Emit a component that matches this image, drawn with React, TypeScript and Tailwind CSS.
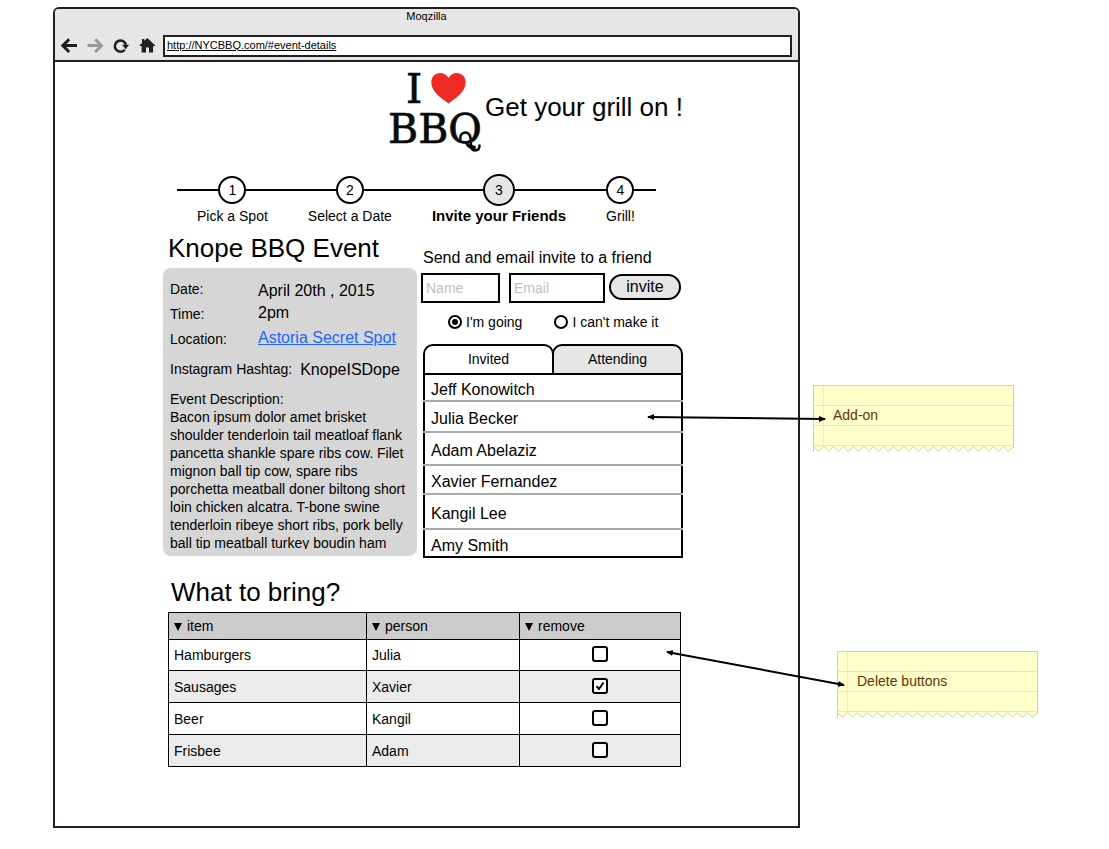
import { useState } from "react";
import type { ReactNode } from "react";

const steps = [
  { label: "Pick a Spot" },
  { label: "Select a Date" },
  { label: "Invite your Friends", current: true },
  { label: "Grill!" },
];

const guests = [
  { name: "Jeff Konowitch", row: "h-[27px]" },
  { name: "Julia Becker", row: "h-[31px]" },
  { name: "Adam Abelaziz", row: "h-[33px]" },
  { name: "Xavier Fernandez", row: "h-[29px]" },
  { name: "Kangil Lee", row: "h-[35px]" },
  { name: "Amy Smith", row: "h-[26px]" },
];

const supplies = [
  { item: "Hamburgers", person: "Julia", remove: false, row: "h-[31px]" },
  { item: "Sausages", person: "Xavier", remove: true, row: "h-8" },
  { item: "Beer", person: "Kangil", remove: false, row: "h-8" },
  { item: "Frisbee", person: "Adam", remove: false, row: "h-8" },
];

function ToolButton({ label, children }: { label: string; children: ReactNode }) {
  return (
    <button type="button" aria-label={label} className="size-4 shrink-0">
      <svg viewBox="0 0 16 16" className="block size-4">
        {children}
      </svg>
    </button>
  );
}

function BrowserBar() {
  return (
    <header className="border-b-2 border-[#231f20] bg-[#e6e6e6] pb-[3px]">
      <div className="text-center text-[11px] leading-[15px]">Moqzilla</div>
      <div className="mt-[11px] flex items-center gap-[10px] px-[6px]">
        <ToolButton label="Back">
          <path d="M8.2 1.2L1.800 7.600l6.400 6.400M2.200 7.600H16" fill="none" stroke="#231f20" strokeWidth="3" />
        </ToolButton>
        <ToolButton label="Forward">
          <path d="M8.2 1.2L14.600 7.600l-6.400 6.400M14.200 7.600H.5" fill="none" stroke="#999" strokeWidth="3" />
        </ToolButton>
        <ToolButton label="Reload">
          <path d="M11.800 11.700A5.600 5.600 0 1 1 13 7" fill="none" stroke="#231f20" strokeWidth="2.500" />
          <path d="M9 6.800h7.200L12.600 11.200z" fill="#231f20" />
        </ToolButton>
        <ToolButton label="Home">
          <path
            d="M8.4 0L16 7.2V8h-1.9v6.6H10V9.6H7v5H2.6V8H.6v-.8L3 5V1h2.4v1.8z"
            fill="#231f20"
          />
        </ToolButton>
        <input
          aria-label="Address"
          defaultValue="http://NYCBBQ.com/#event-details"
          className="-ml-[2px] h-[22px] min-w-0 flex-1 border-2 border-[#231f20] bg-white pb-[3px] pl-[2px] text-[11px] underline underline-offset-1 outline-none"
        />
      </div>
    </header>
  );
}

function Logo() {
  return (
    <svg
      viewBox="0 0 94 84"
      className="h-[84px] w-[94px] overflow-visible"
      role="img"
      aria-label="I love BBQ"
    >
      <g
        fontFamily="'DejaVu Serif', serif"
        fontSize="41"
        fill="#0a0a0a"
        stroke="#0a0a0a"
        strokeWidth="0.7"
      >
        <text x="17" y="33">
          I
        </text>
        <text x="-1" y="73">
          BBQ
        </text>
      </g>
      <path
        d="M71.500 69C69.500 62 80.500 59.500 81.500 68C82.300 74 81 80.500 86 80.500C89 80.500 90.500 78.500 90.500 75.500"
        fill="none"
        stroke="#0a0a0a"
        strokeWidth="2.500"
        strokeLinecap="round"
      />
      <path
        d="M59.500 33.500C53 28.500 42.300 22 42.300 12.500C42.300 6.500 46.500 3 51 3C55 3 58 5 59.500 8C61 5 64 3 68 3C72.500 3 76.700 6.500 76.700 12.500C76.700 22 66 28.500 59.500 33.500z"
        fill="#ee2a24"
      />
    </svg>
  );
}

function Steps() {
  return (
    <ol className="relative mt-5 mr-[27px] ml-[14px] flex gap-10 pl-5 text-[14px]">
      <li aria-hidden="true" className="absolute top-[15px] right-0 left-0 h-[2px] bg-black" />
      {steps.map((step, i) => (
        <li key={step.label} className="relative flex flex-col items-center whitespace-nowrap">
          <div className="flex h-8 items-center">
            <span
              className={
                step.current
                  ? "flex size-8 items-center justify-center rounded-full border-2 border-black bg-[#e6e6e6]"
                  : "flex size-7 items-center justify-center rounded-full border-2 border-black bg-white"
              }
            >
              {i + 1}
            </span>
          </div>
          <span className={step.current ? "text-[15px] leading-5 font-bold" : "leading-5"}>
            {step.label}
          </span>
        </li>
      ))}
    </ol>
  );
}

function EventCard() {
  return (
    <section className="w-[254px] shrink-0">
      <h1 className="pl-[5px] text-[26px] leading-8 whitespace-nowrap">Knope BBQ Event</h1>
      <div className="mt-1 rounded-lg bg-[#d6d6d6] px-[7px] pt-2 pb-[7px] text-[14px]">
        <dl className="grid auto-rows-[25px] grid-cols-[88px_1fr] items-center leading-5">
          <dt>Date:</dt>
          <dd className="pt-1 text-base leading-5">April 20th , 2015</dd>
          <dt>Time:</dt>
          <dd className="self-start pt-[2px] text-base leading-5">2pm</dd>
          <dt>Location:</dt>
          <dd className="self-start pt-[2px] text-base leading-5">
            <a href="#location" className="text-[#1a66ff] underline">
              Astoria Secret Spot
            </a>
          </dd>
        </dl>
        <dl className="mt-2 flex items-center gap-2 leading-5">
          <dt>Instagram Hashtag:</dt>
          <dd className="pt-[2px] text-base leading-[18px]">KnopeISDope</dd>
        </dl>
        <h2 className="mt-[11px] leading-[18px]">Event Description:</h2>
        <p className="-mr-1 h-[141px] overflow-hidden leading-[18px]">
          Bacon ipsum dolor amet brisket shoulder tenderloin tail meatloaf flank pancetta shankle
          spare ribs cow. Filet mignon ball tip cow, spare ribs porchetta meatball doner biltong
          short loin chicken alcatra. T-bone swine tenderloin ribeye short ribs, pork belly ball tip
          meatball turkey boudin ham
        </p>
      </div>
    </section>
  );
}

function Radio({ label, checked }: { label: string; checked?: boolean }) {
  return (
    <label className="flex items-center gap-1">
      <span className="grid size-[14px] place-items-center">
        <input
          type="radio"
          name="rsvp"
          defaultChecked={checked}
          className="peer col-start-1 row-start-1 size-[14px] appearance-none rounded-full border-2 border-black bg-white"
        />
        <span className="pointer-events-none col-start-1 row-start-1 hidden size-[6px] rounded-full bg-black peer-checked:block" />
      </span>
      {label}
    </label>
  );
}

function InvitePanel() {
  const [tab, setTab] = useState("Invited");
  const field =
    "h-[30px] min-w-0 border-2 border-black bg-white px-[3px] text-[14px] outline-none placeholder:text-[#bfbfbf]";
  return (
    <section className="min-w-0 flex-1 pt-[14px]">
      <form onSubmit={(e) => e.preventDefault()}>
        <h2 className="pl-[2px] text-base leading-6">Send and email invite to a friend</h2>
        <div className="mt-[3px] flex items-start">
          <input aria-label="Name" placeholder="Name" className={`${field} w-[79px]`} />
          <input aria-label="Email" placeholder="Email" className={`${field} ml-[9px] w-24`} />
          <button
            type="submit"
            className="mt-px ml-1 h-[26px] w-[72px] rounded-full border-2 border-black bg-[#e6e6e6] text-base leading-5"
          >
            invite
          </button>
        </div>
        <div className="mt-[9px] flex gap-8 pl-[27px] text-[14px] leading-5">
          <Radio label="I'm going" checked />
          <Radio label="I can't make it" />
        </div>
      </form>
      <div className="mt-3 ml-[2px]">
        <div role="tablist" className="flex text-[14px]">
          {["Invited", "Attending"].map((name) => (
            <button
              key={name}
              type="button"
              role="tab"
              aria-selected={tab === name}
              onClick={() => setTab(name)}
              className={`h-[31px] flex-1 rounded-t-[10px] border-2 border-black not-first:-ml-[2px] ${
                tab === name ? "bg-white" : "bg-[#e6e6e6]"
              }`}
            >
              {name}
            </button>
          ))}
        </div>
        <ul className="border-x-2 border-b-2 border-black text-base leading-5">
          {guests.map((guest) => (
            <li
              key={guest.name}
              className={`-mx-[2px] flex items-center border-[#aaa] pt-[5px] pl-2 not-last:border-b-2 ${guest.row}`}
            >
              {guest.name}
            </li>
          ))}
        </ul>
      </div>
    </section>
  );
}

function SupplyTable() {
  return (
    <section className="mt-[18px] mr-[2px] ml-[5px]">
      <h2 className="pl-[3px] text-[26px] leading-8">What to bring?</h2>
      <table className="mt-1 w-full table-fixed border-collapse text-[14px] leading-5">
        <colgroup>
          <col className="w-[198px]" />
          <col className="w-[153px]" />
          <col />
        </colgroup>
        <thead>
          <tr className="h-[27px] bg-[#ccc]">
            {["item", "person", "remove"].map((name) => (
              <th key={name} className="border border-black p-0 pl-[5px] text-left font-normal">
                <span className="flex items-center gap-[5px]">
                  <svg viewBox="0 0 8 8" className="mt-[2px] size-2">
                    <path d="M0 0h8L4 8z" />
                  </svg>
                  {name}
                </span>
              </th>
            ))}
          </tr>
        </thead>
        <tbody>
          {supplies.map((s) => (
            <tr key={s.item} className={`${s.row} even:bg-[#ebebeb]`}>
              <td className="border border-black p-0 pl-[5px]">{s.item}</td>
              <td className="border border-black p-0 pl-[5px]">{s.person}</td>
              <td className="border border-black p-0 pb-[2px]">
                <label className="mx-auto grid size-4 place-items-center">
                  <input
                    type="checkbox"
                    aria-label={`Remove ${s.item}`}
                    defaultChecked={s.remove}
                    className="peer col-start-1 row-start-1 size-4 appearance-none rounded-[3px] border-2 border-black bg-white"
                  />
                  <svg
                    viewBox="0 0 10 10"
                    className="pointer-events-none col-start-1 row-start-1 hidden size-[10px] peer-checked:block"
                  >
                    <path d="M1.500 5.300L4 8L8.500 1.500" fill="none" stroke="#000" strokeWidth="2" />
                  </svg>
                </label>
              </td>
            </tr>
          ))}
        </tbody>
      </table>
    </section>
  );
}

const teeth = Array.from({ length: 20 }, (_, i) => `L${i * 10 + 5.5} 5.500L${i * 10 + 10.5} .5`).join("");

function Note({ children }: { children: ReactNode }) {
  return (
    <div className="w-[201px] text-[14px] text-[#663300]">
      <div className="relative border-x border-t border-[#ccc] bg-[#ffffcc]">
        <div className="h-5 border-b border-[#e6e6b8]" />
        <p className="h-5 border-b border-[#e6e6b8] pl-[19px] leading-[19px]">{children}</p>
        <div className="h-5 border-b border-[#e6e6b8]" />
        <div className="absolute inset-y-0 left-[9px] w-px bg-[#fbe6bf]" />
      </div>
      <svg viewBox="0 0 201 6" className="block h-[6px] w-[201px]">
        <path d={`M.5 0V.5${teeth}V0z`} fill="#ffffcc" />
        <path d={`M.5 6V.5${teeth}V2`} fill="none" stroke="#ccc" />
      </svg>
    </div>
  );
}

function Arrows() {
  return (
    <svg
      viewBox="0 0 210 300"
      aria-hidden="true"
      className="pointer-events-none absolute top-[400px] -left-40 h-[300px] w-[210px]"
    >
      <defs>
        <marker
          id="head"
          markerWidth="7"
          markerHeight="6"
          refX="6"
          refY="3"
          markerUnits="userSpaceOnUse"
          orient="auto-start-reverse"
        >
          <path d="M0 0L7 3L0 6z" />
        </marker>
      </defs>
      <g stroke="#000" strokeWidth="2">
        <path d="M8 17L185 19" markerStart="url(#head)" markerEnd="url(#head)" />
        <path d="M27 252L204 285" markerStart="url(#head)" markerEnd="url(#head)" />
      </g>
    </svg>
  );
}

export default function App() {
  return (
    <div className="flex items-start bg-white pt-[7px] pl-[53px] font-['Liberation_Sans',Arial,sans-serif] text-black">
      <div className="min-w-0 flex-1 overflow-hidden rounded-t-md border-2 border-[#231f20] bg-white">
        <BrowserBar />
        <main className="ml-[108px] max-w-[520px] pt-2 pb-[59px]">
          <div className="flex items-center gap-[2px] pl-[226px]">
            <Logo />
            <p className="pb-[10px] text-[26px] leading-8 whitespace-nowrap">Get your grill on !</p>
          </div>
          <Steps />
          <div className="mt-[6px] flex gap-1">
            <EventCard />
            <InvitePanel />
          </div>
          <SupplyTable />
        </main>
      </div>
      <aside className="relative -mt-[7px] w-[309px] shrink-0 pt-[385px] pl-[13px]">
        <Note>Add-on</Note>
        <div className="mt-[199px] ml-6">
          <Note>Delete buttons</Note>
        </div>
        <Arrows />
      </aside>
    </div>
  );
}
